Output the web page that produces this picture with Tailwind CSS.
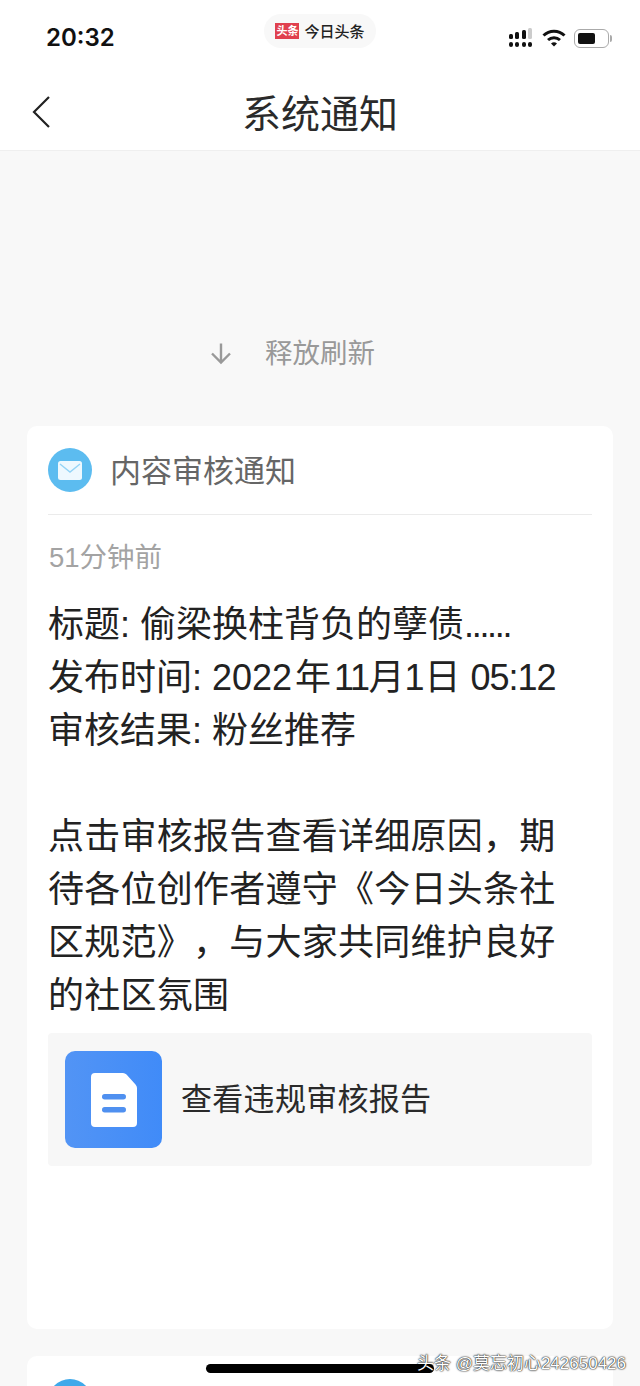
<!DOCTYPE html>
<html lang="zh-CN">
<head>
  <meta charset="UTF-8">
  <title>系统通知</title>
  <script src="https://cdn.jsdelivr.net/npm/@tailwindcss/browser@4"></script>
</head>
<body class="bg-[#f8f8f8] font-['Liberation_Sans','Noto_Sans_CJK_SC',sans-serif]">
  <div class="relative w-[640px] h-[1386px] overflow-hidden">

    <!-- Status bar + nav -->
    <header class="bg-white h-[151px] border-b border-[#efefef]">
      <div class="relative h-[75px] flex items-center justify-between pl-[46px] pr-[28px] pt-[1px]">
        <span class="text-[24px] font-semibold font-['Inter',sans-serif] text-[#111]">20:32</span>
        <div class="absolute left-[264px] top-[14px] w-[112px] h-[34px] rounded-full bg-[#f8f8f8] flex items-center justify-center gap-[5px]">
          <span class="w-[24px] h-[16px] bg-[#e0404e] text-white text-[11px] leading-[16px] text-center font-bold">头条</span>
          <span class="text-[15px] font-medium text-[#222] leading-none">今日头条</span>
        </div>
        <div class="flex items-center gap-[8px]">
          <svg width="26" height="20" viewBox="0 0 26 20" fill="#111">
            <rect x="1" y="6" width="4" height="5" rx="1.5"/><rect x="7" y="4" width="4" height="7" rx="1.5"/><rect x="14" y="2" width="4" height="9" rx="1.5"/><rect x="20" y="0" width="4" height="11" rx="1.5" fill="#ccc"/>
            <rect x="1" y="14" width="4" height="5" rx="2"/><rect x="7" y="14" width="4" height="5" rx="2"/><rect x="14" y="14" width="4" height="5" rx="2"/><rect x="20" y="14" width="4" height="5" rx="2"/>
          </svg>
          <svg width="24" height="18" viewBox="0 0 24 18" fill="none" stroke="#111" stroke-width="3">
            <path d="M1.5 6.5a15 15 0 0 1 21 0"/><path d="M6 11a9 9 0 0 1 12 0"/><path d="M12 17.5l-3-3a4.5 4.5 0 0 1 6 0z" fill="#111" stroke="none"/>
          </svg>
          <div class="flex items-center gap-[1px]">
            <div class="w-[35px] h-[19px] rounded-[6px] border-[1.5px] border-[#aaa] p-[3px]">
              <div class="w-[17px] h-full rounded-[2px] bg-[#111]"></div>
            </div>
            <div class="w-[2px] h-[7px] bg-[#aaa] rounded-r"></div>
          </div>
        </div>
      </div>
      <div class="relative h-[75px] flex items-center justify-center">
        <svg class="absolute left-[30px] top-[20px]" width="22" height="34" viewBox="0 0 22 34" fill="none" stroke="#222" stroke-width="2.2">
          <path d="M19 2L4 17l15 15"/>
        </svg>
        <h1 class="text-[39px] leading-none text-[#2a2a2a] mt-[3px]">系统通知</h1>
      </div>
    </header>

    <!-- Pull to refresh -->
    <div class="h-[275px] pt-[185px] pl-[209px] flex items-start gap-[32px]">
      <svg class="mt-[5px]" width="24" height="24" viewBox="0 0 24 24" fill="none" stroke="#999" stroke-width="2.4">
        <path d="M12 2.5v19M3 12.5l9 9 9-9"/>
      </svg>
      <span class="text-[27.5px] leading-[36px] text-[#999]">释放刷新</span>
    </div>

    <!-- Card -->
    <section class="mx-[27px] h-[903px] bg-white rounded-[10px] px-[21px]">
      <div class="h-[89px] flex items-center gap-[18px] border-b border-[#ebebeb]">
        <div class="w-[44px] h-[44px] rounded-full bg-[#5cbcf0] flex items-center justify-center">
          <svg width="24" height="19" viewBox="0 0 24 19">
            <rect width="24" height="19" rx="2.5" fill="#eef8fe"/>
            <path d="M2 3l10 8 10-8" fill="none" stroke="#93d3f6" stroke-width="1.4"/>
          </svg>
        </div>
        <span class="text-[31px] leading-none text-[#666] mt-[2px]">内容审核通知</span>
      </div>
      <p class="mt-[27px] ml-[1px] text-[27.5px] leading-[32px] text-[#a3a3a3]">51分钟前</p>
      <div class="mt-[24px] text-[36px] leading-[53px] text-[#222] [text-spacing-trim:space-all]">
        <p>标题: 偷梁换柱背负的孽债<span class="tracking-[-2.3px]">......</span></p>
        <p>发布时间: 2022<span class="ml-[3px]">年</span><span class="ml-[3px] tracking-[-1.5px]">11</span>月1日 <span class="tracking-[-1px]">05:12</span></p>
        <p>审核结果: 粉丝推荐</p>
        <p class="mt-[53px] tracking-[0.25px]">点击审核报告查看详细原因，期<br>待各位创作者遵守《今日头条社<br>区规范》，与大家共同维护良好<br>的社区氛围</p>
      </div>
      <div class="mt-[11px] h-[133px] bg-[#f7f7f7] rounded-[4px] flex items-center pl-[17px] gap-[19px]">
        <div class="w-[97px] h-[97px] rounded-[10px] bg-gradient-to-r from-[#5294f5] to-[#408bf8] flex items-center justify-center">
          <svg width="46" height="54" viewBox="0 0 46 54">
            <path d="M4 0h28q2 0 3.500 1.500l9 10q1.500 1.500 1.500 3.500v35a4 4 0 0 1-4 4H4a4 4 0 0 1-4-4V4a4 4 0 0 1 4-4z" fill="#fff"/>
            <rect x="11" y="21" width="24" height="5.500" rx="2.700" fill="#4f90f0"/>
            <rect x="11" y="34" width="24" height="5.500" rx="2.700" fill="#4f90f0"/>
          </svg>
        </div>
        <span class="text-[31px] tracking-[0.3px] leading-none text-[#2a2a2a]">查看违规审核报告</span>
      </div>
    </section>

    <!-- Next card peeking in -->
    <section class="relative mx-[27px] mt-[27px] h-[60px] bg-white rounded-t-[10px]">
      <div class="absolute left-[21px] top-[23px] w-[44px] h-[44px] rounded-full bg-[#3fa9ea]"></div>
    </section>

    <!-- Home indicator + watermark -->
    <div class="absolute left-[206px] top-[1364px] w-[228px] h-[9px] rounded-full bg-black"></div>
    <span class="absolute right-[14px] top-[1353px] text-[17px] leading-[22px] text-white [text-shadow:0_0_2px_#000,0_0_1px_#000]">头条 @莫忘初心242650426</span>
  </div>
</body>
</html>
